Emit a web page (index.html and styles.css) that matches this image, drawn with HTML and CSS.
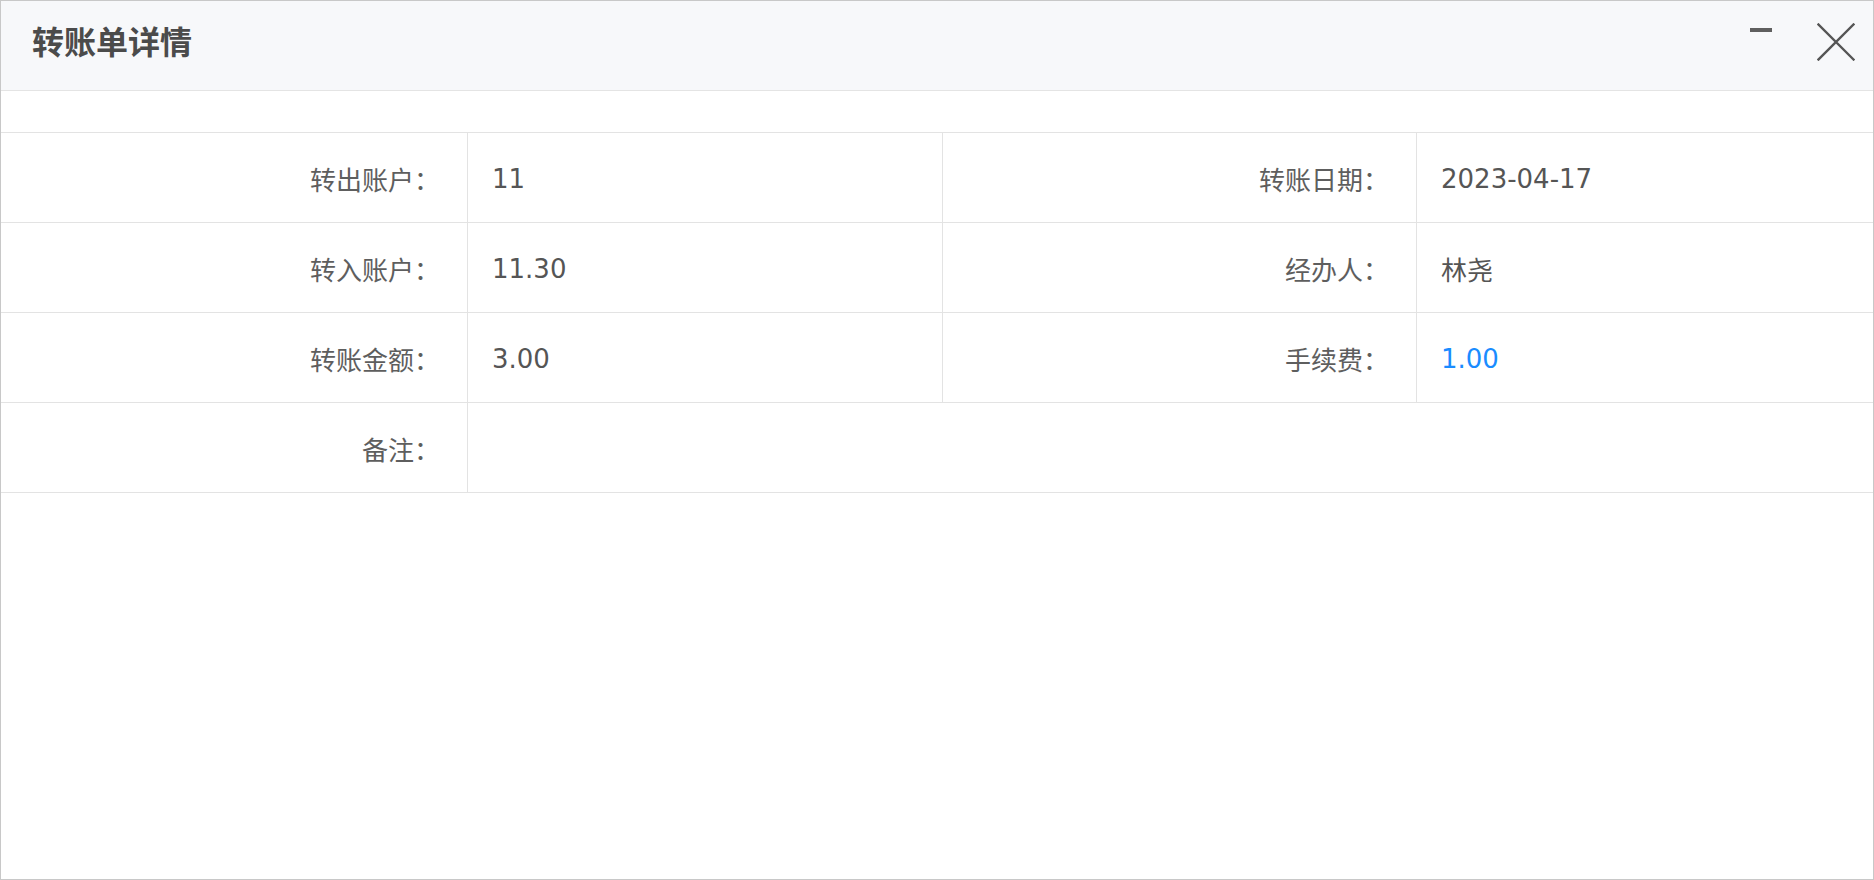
FILE: index.html
```html
<!DOCTYPE html>
<html lang="zh-CN">
<head>
<meta charset="utf-8">
<title>转账单详情</title>
<link rel="stylesheet" href="styles.css">
</head>
<body>
<div class="dialog">
  <div class="dialog-header">
    <div class="dialog-title">转账单详情</div>
    <div class="dialog-tools">
      <span class="tool-min" aria-label="最小化"></span>
      <svg class="tool-close" width="38" height="38" viewBox="0 0 38 38" aria-label="关闭">
        <path d="M1.5 1.5 L36.5 36.5 M36.5 1.5 L1.5 36.5" stroke="#555" stroke-width="2.4" fill="none" stroke-linecap="square"/>
      </svg>
    </div>
  </div>
  <div class="dialog-body">
    <div class="desc">
      <div class="cell label">转出账户：</div>
      <div class="cell value">11</div>
      <div class="cell label">转账日期：</div>
      <div class="cell value last">2023-04-17</div>

      <div class="cell label">转入账户：</div>
      <div class="cell value">11.30</div>
      <div class="cell label">经办人：</div>
      <div class="cell value last">林尧</div>

      <div class="cell label">转账金额：</div>
      <div class="cell value">3.00</div>
      <div class="cell label">手续费：</div>
      <div class="cell value last blue">1.00</div>

      <div class="cell label">备注：</div>
      <div class="cell value last span3"></div>
    </div>
  </div>
</div>
</body>
</html>
```

FILE: styles.css
```css
* { box-sizing: border-box; }
html, body { margin: 0; padding: 0; background: #fff; }
body {
  font-family: "Noto Sans CJK SC", sans-serif;
  color: #5c5c5c;
}
.dialog {
  width: 1874px;
  height: 880px;
  border: 1px solid #c8c8c8;
  display: flex;
  flex-direction: column;
  background: #fff;
}
.dialog-header {
  height: 90px;
  flex: none;
  background: #f7f8fa;
  border-bottom: 1px solid #e4e4e4;
  display: flex;
  align-items: flex-start;
  justify-content: space-between;
  padding: 0 18px 0 31px;
}
.dialog-title {
  font-family: "Noto Sans CJK SC", sans-serif;
  font-size: 32px;
  font-weight: 700;
  color: #4b4b4b;
  line-height: 40px;
  margin-top: 19px;
}
.dialog-tools {
  display: flex;
  align-items: flex-start;
}
.tool-min {
  display: block;
  width: 22px;
  height: 4px;
  background: #5f5f5f;
  margin-top: 27px;
  margin-right: 45px;
}
.tool-close {
  display: block;
  margin-top: 22px;
}
.dialog-body {
  padding-top: 41px;
}
.desc {
  display: grid;
  grid-template-columns: 467px 475px 474px 1fr;
  border-top: 1px solid #e3e3e3;
}
.cell {
  height: 90px;
  border-right: 1px solid #e3e3e3;
  border-bottom: 1px solid #e3e3e3;
  display: flex;
  align-items: center;
  font-size: 26px;
}
.cell.last { border-right: none; }
.label {
  justify-content: flex-end;
  padding-right: 27px;
  padding-top: 2px;
  color: #5e5e5e;
}
.value {
  font-family: "DejaVu Sans", "Noto Sans CJK SC", sans-serif;
  padding-left: 24px;
  padding-top: 2px;
  color: #555;
}
.value.blue { color: #1a8cff; }
.span3 { grid-column: span 3; }
```
